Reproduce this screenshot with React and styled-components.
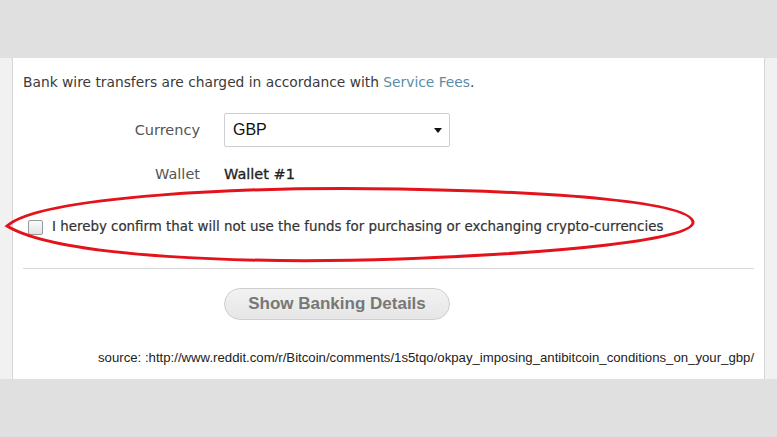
import React from "react";
import styled, { createGlobalStyle } from "styled-components";

const GlobalStyle = createGlobalStyle`
  html, body {
    margin: 0;
    padding: 0;
    background: #e0e0e0;
  }
`;

const Page = styled.div`
  position: relative;
  width: 777px;
  height: 437px;
  display: flex;
  flex-direction: column;
  background: #e0e0e0;
  overflow: hidden;
`;

const TopBand = styled.div`
  height: 58px;
  flex: none;
`;

const Middle = styled.div`
  height: 321px;
  flex: none;
  display: flex;
`;

const Strip = styled.div`
  width: ${(p) => p.w}px;
  flex: none;
  background: #f1f1f1;
  border-${(p) => p.side}: 1px solid #d6d6d6;
`;

const Panel = styled.div`
  flex: 1;
  background: #fff;
  padding: 14px 10px 0 10px;
  font-family: "DejaVu Sans", Tahoma, sans-serif;
  color: #3a3a3a;
`;

const Intro = styled.p`
  margin: 0;
  font-size: 13.8px;
  line-height: 20px;
`;

const Link = styled.a`
  color: #5b8ea6;
  text-decoration: none;
`;

const Row = styled.div`
  display: grid;
  grid-template-columns: 177px 226px;
  column-gap: 24px;
  align-items: center;
  margin-top: ${(p) => p.top}px;
`;

const Label = styled.span`
  text-align: right;
  font-size: 14.5px;
  line-height: 20px;
  color: #555;
`;

const Select = styled.div`
  height: 32px;
  border: 1px solid #cfcfcf;
  border-radius: 2px;
  display: flex;
  align-items: center;
  justify-content: space-between;
  padding: 0 7px 0 8px;
  font-family: "Liberation Sans", Arial, sans-serif;
  font-size: 16px;
  color: #111;
`;

const Caret = styled.span`
  width: 0;
  height: 0;
  border-left: 4px solid transparent;
  border-right: 4px solid transparent;
  border-top: 5px solid #111;
`;

const Value = styled.span`
  font-size: 14.5px;
  line-height: 20px;
  color: #222;
  -webkit-text-stroke: 0.3px #222;
`;

const Confirm = styled.label`
  display: flex;
  align-items: center;
  gap: 9px;
  margin-top: 33px;
  padding-left: 5px;
  font-size: 13.4px;
  line-height: 20px;
  color: #333;
  -webkit-text-stroke: 0.2px #333;
`;

const Box = styled.span`
  width: 13px;
  height: 13px;
  flex: none;
  border: 1px solid #9a9a9a;
  border-radius: 2px;
  background: linear-gradient(#fbfbfb, #e2e2e2);
`;

const Rule = styled.hr`
  margin: 31px 0 0 0;
  border: none;
  border-top: 1px solid #d9d9d9;
`;

const ButtonRow = styled.div`
  margin-top: 19px;
  padding-left: 201px;
`;

const Button = styled.button`
  width: 226px;
  height: 32px;
  border: 1px solid #cfcfcf;
  border-radius: 16px;
  background: linear-gradient(#f2f2f2, #e6e6e6);
  font-family: "Liberation Sans", Arial, sans-serif;
  font-size: 17px;
  font-weight: bold;
  color: #777;
`;

const Source = styled.div`
  margin-top: 30px;
  padding-left: 75px;
  font-family: "Liberation Sans", Arial, sans-serif;
  font-size: 13.2px;
  line-height: 16px;
  color: #222;
  white-space: nowrap;
`;

const Mark = styled.svg`
  position: absolute;
  left: 0;
  top: 0;
  pointer-events: none;
`;

export default function App() {
  return (
    <>
      <GlobalStyle />
      <Page>
        <TopBand />
        <Middle>
          <Strip w={12} side="right" />
          <Panel>
            <Intro>
              Bank wire transfers are charged in accordance with <Link>Service Fees</Link>.
            </Intro>
            <Row top={21}>
              <Label>Currency</Label>
              <Select>
                GBP
                <Caret />
              </Select>
            </Row>
            <Row top={17}>
              <Label>Wallet</Label>
              <Value>Wallet #1</Value>
            </Row>
            <Confirm>
              <Box />
              I hereby confirm that will not use the funds for purchasing or exchanging crypto-currencies
            </Confirm>
            <Rule />
            <ButtonRow>
              <Button>Show Banking Details</Button>
            </ButtonRow>
            <Source>
              source: :http://www.reddit.com/r/Bitcoin/comments/1s5tqo/okpay_imposing_antibitcoin_conditions_on_your_gbp/
            </Source>
          </Panel>
          <Strip w={16} side="left" />
        </Middle>
        <Mark width="777" height="437" viewBox="0 0 777 437">
          <path
            d="M7,226 C40,196 250,186 400,189 C560,192 690,202 693,222 C695,240 560,253 400,259 C250,264 60,258 7,226 Z"
            fill="none"
            stroke="#e3121b"
            strokeWidth="3"
          />
        </Mark>
      </Page>
    </>
  );
}
